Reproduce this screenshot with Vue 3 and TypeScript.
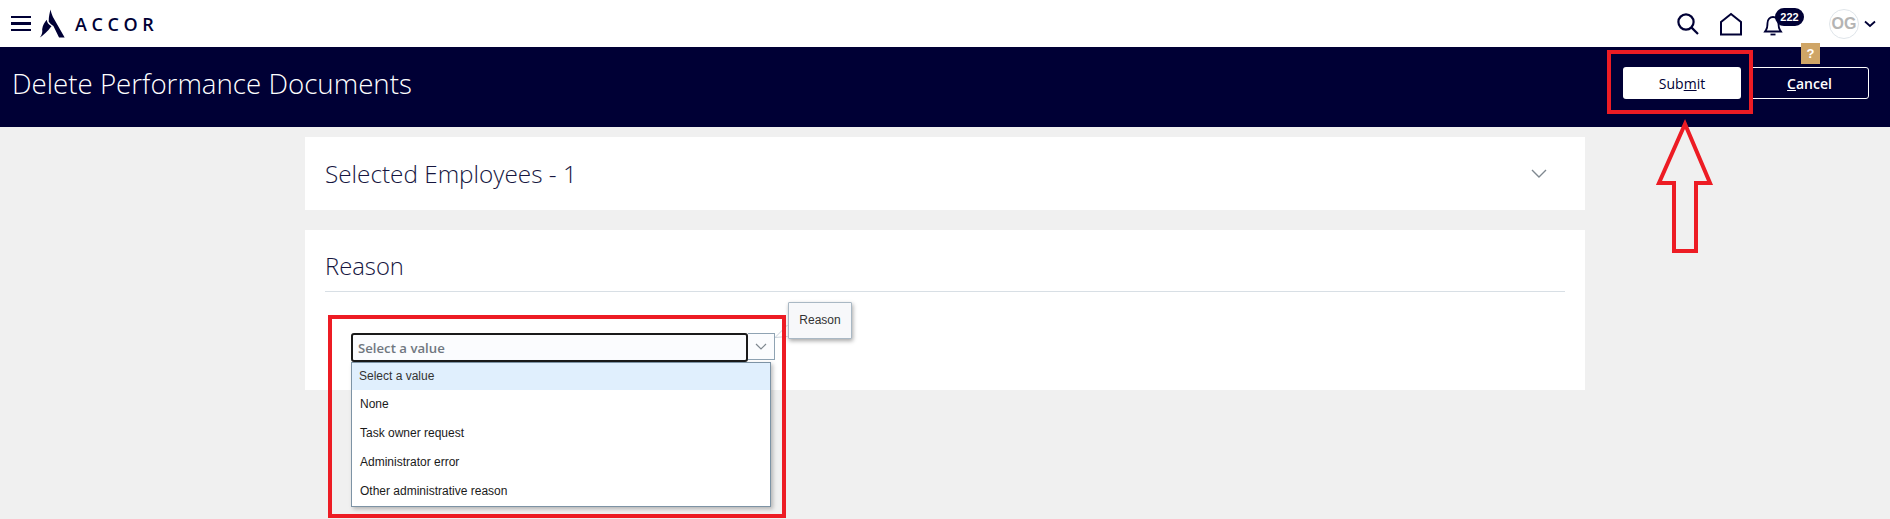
<template>
  <div class="page">
    <header class="topbar">
      <div class="brand">
        <button class="burger" aria-label="Menu"><span /><span /><span /></button>
        <svg class="logo-mark" width="28" height="30" viewBox="0 0 28 32" aria-hidden="true">
          <path d="M12.5 0.5 C13 4 14 6 15 8.5 L27.5 30.5 L21.5 30.5 L15.5 18 C13.5 17 11.5 15 10.5 13.5 C10.5 8 11.5 4 12.5 0.5Z" fill="#000035" />
          <path d="M8.5 11.5 C8.5 14 10 16.5 13.5 18.5 C11 21.5 8 26 1 30.5 C3.5 27 4 24.5 3.5 21.5 C4 18 6 14 8.5 11.5Z" fill="#000035" />
        </svg>
        <span class="logo-text">ACCOR</span>
      </div>
      <div class="tools">
        <svg class="search" width="24" height="24" viewBox="0 0 24 24" fill="none" stroke="#000035" stroke-width="2.2" aria-hidden="true">
          <circle cx="10" cy="10" r="7.6" /><path d="M15.6 15.6 L22 22" />
        </svg>
        <svg class="home" width="24" height="24" viewBox="0 0 24 24" fill="none" stroke="#000035" stroke-width="2" aria-hidden="true">
          <path d="M2 10 L12 2 L22 10 V22.5 H2Z" />
        </svg>
        <div class="bell">
          <svg width="20" height="24" viewBox="0 0 20 24" fill="none" stroke="#000035" stroke-width="1.8" aria-hidden="true">
            <path d="M3 17 C4.5 15 4.5 13 4.5 10 C4.5 6.5 7 4 10 4 C13 4 15.5 6.5 15.5 10 C15.5 13 15.5 15 17 17 L18 18.5 H2Z" />
            <path d="M7.5 21.5 H12.5" />
          </svg>
          <span class="count">222</span>
        </div>
        <div class="avatar">OG</div>
        <svg class="caret" width="12" height="8" viewBox="0 0 12 8" fill="none" stroke="#000035" stroke-width="1.8" aria-hidden="true">
          <path d="M1 1.5 L6 6 L11 1.5" />
        </svg>
      </div>
    </header>

    <div class="title-bar">
      <h1>Delete Performance Documents</h1>
      <div class="actions">
        <button class="btn primary">Sub<u>m</u>it</button>
        <button class="btn ghost"><u>C</u>ancel</button>
      </div>
      <span class="help">?</span>
    </div>

    <main class="content">
      <section class="card employees">
        <h2>Selected Employees - 1</h2>
        <svg width="16" height="10" viewBox="0 0 16 10" fill="none" stroke="#7f8890" stroke-width="1.4" aria-hidden="true">
          <path d="M1 1 L8 8 L15 1" />
        </svg>
      </section>

      <section class="card reason">
        <h2>Reason</h2>
        <div class="rule" />
        <div class="select">
          <div class="select-row">
            <div class="select-input">Select a value</div>
            <div class="select-btn">
              <svg width="12" height="7" viewBox="0 0 12 7" fill="none" stroke="#7f8890" stroke-width="1.2" aria-hidden="true">
                <path d="M1 1 L6 6 L11 1" />
              </svg>
            </div>
          </div>
          <ul class="options">
            <li v-for="(opt, i) in options" :key="opt" :class="{ active: i === 0 }">{{ opt }}</li>
          </ul>
          <svg class="connector" width="13" height="14" viewBox="0 0 13 14" fill="none" stroke="#c9d2da" stroke-width="1" aria-hidden="true">
            <path d="M0 13.5 L12.5 1 M0 13.5 L12.5 12.5" />
          </svg>
          <div class="tip">Reason</div>
        </div>
      </section>
    </main>

    <!-- red annotations drawn over the screenshot -->
    <div class="mark mark-submit" />
    <div class="mark mark-select" />
    <svg class="mark-arrow" width="70" height="150" viewBox="0 0 70 150" fill="none" stroke="#ed1c24" stroke-width="4" aria-hidden="true">
      <path d="M35 14 L9 73 H24 V141 H46 V73 H60Z" />
    </svg>
  </div>
</template>

<script setup lang="ts">
const options: string[] = [
  'Select a value',
  'None',
  'Task owner request',
  'Administrator error',
  'Other administrative reason',
]
</script>

<style>
html, body { margin: 0; background: #f0f0f0; }
</style>

<style scoped>
.page {
  position: relative;
  width: 1890px;
  height: 519px;
  overflow: hidden;
  background: #f0f0f0;
  font-family: "Open Sans", "Liberation Sans", sans-serif;
}

.topbar {
  height: 47px;
  background: #fff;
  display: flex;
  align-items: center;
  justify-content: space-between;
}
.brand { display: flex; align-items: center; padding-left: 11px; }
.burger {
  width: 20px;
  padding: 0;
  border: 0;
  background: none;
  display: flex;
  flex-direction: column;
  gap: 4px;
  margin-right: 7px;
}
.burger span { display: block; height: 2.5px; background: #000035; }
.logo-mark { margin-right: 9px; }
.logo-text {
  font-size: 18px;
  font-weight: 600;
  letter-spacing: 4.6px;
  color: #000035;
}

.tools { display: flex; align-items: center; padding-right: 14px; }
.search { margin-right: 19px; }
.home { margin-right: 20px; }
.bell { position: relative; display: flex; margin-right: 46px; margin-top: 2px; }
.count {
  position: absolute;
  left: 12px;
  top: -5px;
  width: 29px;
  height: 18px;
  border-radius: 9px;
  background: #000035;
  color: #fff;
  font: 700 11px/18px "Liberation Sans", sans-serif;
  text-align: center;
}
.avatar {
  width: 28px;
  height: 28px;
  border: 1px solid #dfe5ea;
  border-radius: 50%;
  color: #b4b4b4;
  font: 700 16px/28px "Liberation Sans", sans-serif;
  text-align: center;
  margin-right: 5px;
}

.title-bar {
  position: relative;
  height: 80px;
  background: #000035;
  display: flex;
  align-items: center;
  justify-content: space-between;
  padding: 0 21px 0 12px;
}
.title-bar h1 {
  margin: 0 0 8px;
  font-size: 27.7px;
  font-weight: 300;
  color: #fff;
}
.actions { display: flex; gap: 9px; margin-top: -8px; }
.btn {
  height: 32px;
  padding: 0;
  border-radius: 3px;
  font: 600 14px "Open Sans", "Liberation Sans", sans-serif;
}
.primary { width: 118px; background: #fff; border: 0; color: #000035; font-weight: 500; }
.ghost { width: 119px; background: transparent; border: 1px solid #fff; color: #fff; }
.help {
  position: absolute;
  left: 1801px;
  top: -4px;
  width: 19px;
  height: 21px;
  background: #cfa566;
  color: #fff;
  font: 700 13px/21px "Liberation Sans", sans-serif;
  text-align: center;
}

.content {
  width: 1280px;
  margin: 10px 0 0 305px;
  display: flex;
  flex-direction: column;
  gap: 20px;
}
.card { background: #fff; padding: 0 20px; }
.card h2 {
  margin: 0;
  font-size: 23.8px;
  font-weight: 300;
  color: #16163f;
}
.employees {
  height: 73px;
  display: flex;
  align-items: center;
  justify-content: space-between;
  padding-right: 38px;
}
.employees h2 { font-size: 24.3px; }
.reason { height: 160px; box-sizing: border-box; padding-top: 21px; }
.reason h2 { line-height: 30px; }
.rule { height: 1px; background: #d8dfe5; margin-top: 10px; }

.select { position: relative; width: 424px; margin: 0 0 0 26px; padding-top: 41px; }
.select-row { display: flex; height: 29px; align-items: flex-start; }
.select-input {
  box-sizing: border-box;
  width: 397px;
  height: 29px;
  border: 2px solid #1a1a1a;
  border-radius: 3px;
  background: #fbfcfe;
  padding-left: 5px;
  color: #707780;
  font: 600 13.2px/27px "Open Sans", "Liberation Sans", sans-serif;
}
.select-btn {
  box-sizing: border-box;
  width: 27px;
  height: 27px;
  border: 1px solid #8fa3b3;
  border-left: 0;
  background: #fbfcfe;
  display: flex;
  align-items: center;
  justify-content: center;
}
.options {
  position: absolute;
  left: 0;
  top: 70px;
  box-sizing: border-box;
  width: 420px;
  height: 145px;
  margin: 0;
  padding: 0;
  list-style: none;
  background: #fff;
  border: 1px solid #7d93a5;
  box-shadow: 2px 2px 4px rgba(0, 0, 0, 0.25);
}
.options li {
  height: 29px;
  padding-left: 8px;
  color: #1a1a1a;
  font: 12px/29px "Liberation Sans", sans-serif;
}
.options li.active { height: 27px; line-height: 26px; background: #e0effd; padding-left: 7px; color: #333; }
.connector { position: absolute; left: 424px; top: 32px; }
.tip {
  position: absolute;
  left: 437px;
  top: 10px;
  box-sizing: border-box;
  width: 64px;
  height: 37px;
  border: 1px solid #a9b8c4;
  border-radius: 1px;
  background: #f7f8fa;
  box-shadow: 1px 2px 4px rgba(0, 0, 0, 0.35);
  color: #333;
  font: 12px/35px "Liberation Sans", sans-serif;
  text-align: center;
}

.mark { position: absolute; box-sizing: border-box; border: 4px solid #ed1c24; }
.mark-submit { left: 1607px; top: 50px; width: 146px; height: 64px; }
.mark-select { left: 328px; top: 315px; width: 458px; height: 203px; }
.mark-arrow { position: absolute; left: 1650px; top: 110px; }
</style>
